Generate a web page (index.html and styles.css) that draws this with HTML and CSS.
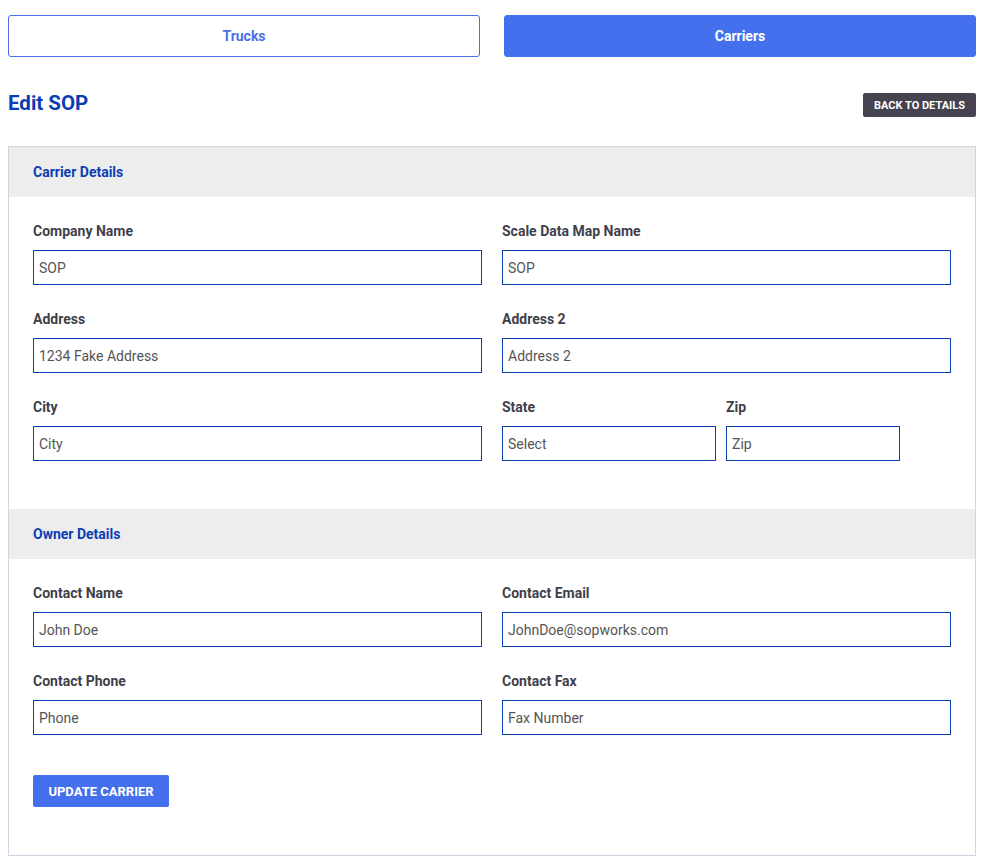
FILE: index.html
```html
<!DOCTYPE html>
<html lang="en">
<head>
<meta charset="utf-8">
<title>Edit SOP</title>
<link rel="stylesheet" href="styles.css">
</head>
<body>
<div class="page">
  <div class="tabs">
    <button class="tab">Trucks</button>
    <button class="tab tab-active">Carriers</button>
  </div>
  <div class="title-row">
    <h1 class="title">Edit SOP</h1>
    <button class="btn-back">BACK TO DETAILS</button>
  </div>
  <div class="card">
    <div class="section-head">Carrier Details</div>
    <div class="section-body">
      <div class="grid">
        <div class="field">
          <label class="label">Company Name</label>
          <input class="input" value="SOP">
        </div>
        <div class="field">
          <label class="label">Scale Data Map Name</label>
          <input class="input" value="SOP">
        </div>
        <div class="field">
          <label class="label">Address</label>
          <input class="input" value="1234 Fake Address">
        </div>
        <div class="field">
          <label class="label">Address 2</label>
          <input class="input" placeholder="Address 2">
        </div>
        <div class="field">
          <label class="label">City</label>
          <input class="input" placeholder="City">
        </div>
        <div class="split">
          <div class="field state">
            <label class="label">State</label>
            <div class="input select">Select</div>
          </div>
          <div class="field zip">
            <label class="label">Zip</label>
            <input class="input" placeholder="Zip">
          </div>
        </div>
      </div>
    </div>
    <div class="section-head">Owner Details</div>
    <div class="section-body">
      <div class="grid">
        <div class="field">
          <label class="label">Contact Name</label>
          <input class="input" value="John Doe">
        </div>
        <div class="field">
          <label class="label">Contact Email</label>
          <input class="input" value="JohnDoe@sopworks.com">
        </div>
        <div class="field">
          <label class="label">Contact Phone</label>
          <input class="input" placeholder="Phone">
        </div>
        <div class="field">
          <label class="label">Contact Fax</label>
          <input class="input" placeholder="Fax Number">
        </div>
      </div>
      <button class="btn-update">UPDATE CARRIER</button>
    </div>
  </div>
</div>
</body>
</html>
```

FILE: styles.css
```css
* { box-sizing: border-box; }
body {
  margin: 8px 6px 8px 8px;
  font-family: Roboto, "Liberation Sans", Arial, sans-serif;
  background: #fff;
  color: #3f3f4b;
}
.page {
  padding-top: 7px;
}
.tabs {
  display: flex;
  gap: 24px;
}
.tab {
  flex: 1;
  height: 42px;
  border: 1px solid #4a6fe8;
  border-radius: 3px;
  background: #fff;
  color: #4a6fe8;
  font-family: inherit;
  font-size: 14px;
  font-weight: 700;
  cursor: pointer;
}
.tab-active {
  background: #4570ed;
  border-color: #4570ed;
  color: #fff;
}
.title-row {
  display: flex;
  justify-content: space-between;
  align-items: center;
  height: 24px;
  margin-top: 36px;
}
.title {
  margin: 0;
  font-size: 20.5px;
  font-weight: 700;
  color: #0b3db3;
  line-height: 24px;
  position: relative;
  top: -2px;
}
.btn-back {
  height: 24px;
  width: 113px;
  padding: 0;
  border: none;
  border-radius: 2px;
  background: #45434f;
  color: #fff;
  font-family: inherit;
  font-size: 11px;
  font-weight: 700;
}
.card {
  margin-top: 29px;
  border: 1px solid #d3d2e2;
}
.section-head {
  height: 50px;
  display: flex;
  align-items: center;
  padding-left: 24px;
  background: #ededed;
  color: #0b3db3;
  font-size: 14px;
  font-weight: 700;
}
.section-body {
  padding: 24px 24px 48px;
}
.grid {
  display: grid;
  grid-template-columns: 1fr 1fr;
  column-gap: 20px;
  row-gap: 24px;
}
.field {
  display: flex;
  flex-direction: column;
}
.label {
  font-size: 14px;
  font-weight: 700;
  line-height: 20px;
  margin-bottom: 9px;
  color: #3f3f4b;
}
.input {
  height: 35px;
  width: 100%;
  border: 1px solid #0a3fb5;
  border-radius: 0;
  padding: 0 5px;
  font-family: inherit;
  font-size: 14px;
  color: #555;
  background: #fff;
  outline: none;
}
.input::placeholder { color: #555; opacity: 1; }
.select {
  display: flex;
  align-items: center;
}
.split {
  display: flex;
  gap: 10px;
}
.state { width: 214px; }
.zip { width: 174px; }
.btn-update {
  margin-top: 40px;
  width: 136px;
  height: 32px;
  border: none;
  border-radius: 2px;
  background: #4570ed;
  color: #fff;
  font-family: inherit;
  font-size: 13px;
  font-weight: 700;
  padding: 0;
}
```
